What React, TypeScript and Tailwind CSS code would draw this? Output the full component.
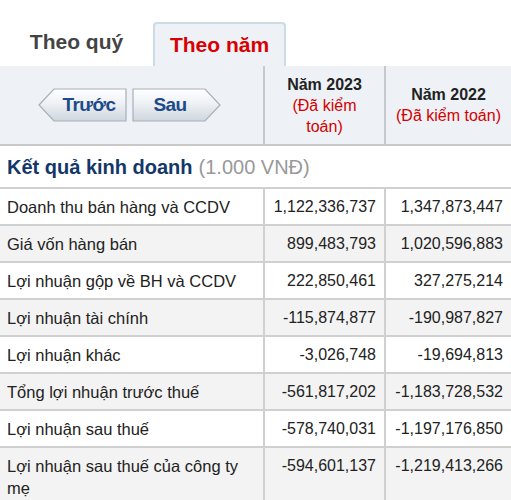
import React from "react";

const rows: [string, string, string][] = [
  ["Doanh thu bán hàng và CCDV", "1,122,336,737", "1,347,873,447"],
  ["Giá vốn hàng bán", "899,483,793", "1,020,596,883"],
  ["Lợi nhuận gộp về BH và CCDV", "222,850,461", "327,275,214"],
  ["Lợi nhuận tài chính", "-115,874,877", "-190,987,827"],
  ["Lợi nhuận khác", "-3,026,748", "-19,694,813"],
  ["Tổng lợi nhuận trước thuế", "-561,817,202", "-1,183,728,532"],
  ["Lợi nhuận sau thuế", "-578,740,031", "-1,197,176,850"],
  ["Lợi nhuận sau thuế của công ty mẹ", "-594,601,137", "-1,219,413,266"],
];

const NavButton = ({ label, dir }: { label: string; dir: "left" | "right" }) => {
  const pts =
    dir === "left"
      ? "1,17 16,1 88,1 88,33 16,33"
      : "1,1 73,1 88,17 73,33 1,33";
  const id = "g-" + dir;
  return (
    <div className="relative w-[90px] h-[35px]">
      <svg className="absolute inset-0" width="90" height="35" viewBox="0 0 90 35">
        <defs>
          <linearGradient id={id} x1="0" y1="0" x2="0" y2="1">
            <stop offset="0" stopColor="#ffffff" />
            <stop offset="0.45" stopColor="#eef1f5" />
            <stop offset="1" stopColor="#cfd6de" />
          </linearGradient>
        </defs>
        <polygon points={pts} fill={`url(#${id})`} stroke="#a9b0b8" strokeWidth="1.2" />
      </svg>
      <span
        className={`absolute inset-0 flex items-center justify-center text-[19px] font-bold text-[#1d4a88] tracking-[-0.6px] ${
          dir === "left" ? "pl-[12px]" : "pr-[14px]"
        }`}
      >
        {label}
      </span>
    </div>
  );
};

export default function App() {
  return (
    <div className="w-[511px] h-[500px] overflow-hidden bg-white font-['Liberation_Sans',Arial,sans-serif] text-[#222]">
      {/* tabs */}
      <div className="flex items-end h-[66px]">
        <div className="w-[153px] h-[44px] flex items-center justify-center pb-[4px] text-[21px] font-bold text-[#444]">
          Theo quý
        </div>
        <div className="w-[133px] h-[44px] flex items-center justify-center rounded-t-[4px] border-2 border-b-0 border-[#cbdbe7] bg-[#eef2f7] text-[21px] font-bold text-[#d80000]">
          Theo năm
        </div>
      </div>

      {/* header */}
      <div className="grid grid-cols-[265px_121px_1fr] h-[80px] bg-[#eef2f7] border-b-2 border-[#c8c8c8]">
        <div className="border-r-2 border-[#c5c9ce] flex items-center pl-[38px] gap-[4px]">
          <NavButton label="Trước" dir="left" />
          <NavButton label="Sau" dir="right" />
        </div>
        <div className="border-r-2 border-[#c5c9ce] flex flex-col items-center justify-center text-[16px] leading-[21px] text-center">
          <span className="font-bold">Năm 2023</span>
          <span className="text-[#d40000]">(Đã kiểm</span>
          <span className="text-[#d40000]">toán)</span>
        </div>
        <div className="flex flex-col items-center justify-center text-[16px] leading-[21px] text-center">
          <span className="font-bold">Năm 2022</span>
          <span className="text-[#d40000]">(Đã kiểm toán)</span>
        </div>
      </div>

      {/* section title */}
      <div className="h-[43px] border-b-2 border-[#d0d0d0] flex items-center px-[7px] text-[20px]">
        <span className="font-bold text-[#143769]">Kết quả kinh doanh</span>
        <span className="text-[#999] ml-[6px]">(1.000 VNĐ)</span>
      </div>

      {/* data */}
      {rows.map(([name, a, b], i) => (
        <div
          key={name}
          className={`grid grid-cols-[265px_121px_1fr] border-b-2 border-[#d0d0d0] text-[16px] leading-[22px] ${
            i % 2 === 1 ? "bg-[#f3f3f3]" : "bg-white"
          }`}
        >
          <div className="border-r-2 border-[#d0d0d0] px-[7px] py-[6.5px] text-[16.5px]">{name}</div>
          <div className="border-r-2 border-[#d0d0d0] pr-[8px] py-[6.5px] text-right">{a}</div>
          <div className="pr-[8px] py-[6.5px] text-right">{b}</div>
        </div>
      ))}
    </div>
  );
}
